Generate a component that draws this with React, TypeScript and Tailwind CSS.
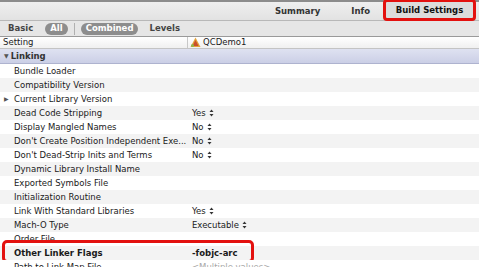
import React from 'react';

type Row = { name: string; value?: string; popup?: boolean; arrow?: boolean; bold?: boolean; muted?: boolean };

const rows: Row[] = [
  { name: 'Bundle Loader' },
  { name: 'Compatibility Version' },
  { name: 'Current Library Version', arrow: true },
  { name: 'Dead Code Stripping', value: 'Yes', popup: true },
  { name: 'Display Mangled Names', value: 'No', popup: true },
  { name: "Don't Create Position Independent Exe...", value: 'No', popup: true },
  { name: "Don't Dead-Strip Inits and Terms", value: 'No', popup: true },
  { name: 'Dynamic Library Install Name' },
  { name: 'Exported Symbols File' },
  { name: 'Initialization Routine' },
  { name: 'Link With Standard Libraries', value: 'Yes', popup: true },
  { name: 'Mach-O Type', value: 'Executable', popup: true },
  { name: 'Order File' },
  { name: 'Other Linker Flags', value: '-fobjc-arc', bold: true },
  { name: 'Path to Link Map File', value: '<Multiple values>', muted: true },
];

const Stepper = () => (
  <svg width="5" height="8" viewBox="0 0 5 8" className="ml-[3px] inline-block">
    <path d="M2.5 0.5 L4.5 3 L0.5 3 Z" fill="#333" />
    <path d="M2.5 7.5 L4.5 5 L0.5 5 Z" fill="#333" />
  </svg>
);

const AppIcon = () => (
  <svg width="11" height="11" viewBox="0 0 11 11" className="mr-[2px]">
    <path d="M5.5 0.5 L10.5 10 L0.5 10 Z" fill="#e3a23a" />
    <path d="M5.5 3 L8.5 9 L2.5 9 Z" fill="#c94f2a" />
    <circle cx="2.5" cy="8.5" r="1.5" fill="#8fb84a" />
  </svg>
);

export default function App() {
  return (
    <div className="w-[479px] h-[267px] overflow-hidden bg-white text-[#1a1a1a] font-['DejaVu_Sans',sans-serif] text-[8.5px] leading-none">
      {/* tab bar */}
      <div className="h-[21px] flex items-center justify-end border-t-2 border-[#8c8c8c] border-b border-b-[#b8b8b8] bg-gradient-to-b from-[#efefef] to-[#e2e2e2]">
        <span className="mr-[31px] font-semibold text-[#333]">Summary</span>
        <span className="mr-[13px] font-semibold text-[#333]">Info</span>
        <div className="h-[22px] -mt-[2px] w-[93px] mr-[3px] flex items-center justify-center rounded-[4px] border-[3px] border-[#e3110f] bg-[#dcdcdc] font-bold text-[#111]">
          Build Settings
        </div>
      </div>

      {/* filter bar */}
      <div className="h-[15px] flex items-center bg-[#e6e6e6] pl-[8px]">
        <span className="font-bold text-[#444]">Basic</span>
        <span className="ml-[12px] h-[12px] px-[5px] flex items-center rounded-full bg-[#8d8d8d] font-bold text-white">All</span>
        <span className="ml-[6px] h-[12px] w-px bg-[#b0b0b0]" />
        <span className="ml-[6px] h-[12px] px-[5px] flex items-center rounded-full bg-[#8d8d8d] font-bold text-white">Combined</span>
        <span className="ml-[11px] font-bold text-[#444]">Levels</span>
      </div>

      {/* header */}
      <div className="h-[13px] flex items-center border-t border-[#9a9a9a] border-b border-b-[#c4c4c4] bg-gradient-to-b from-[#ffffff] to-[#f0f0f0]">
        <span className="w-[188px] pl-[3px] border-r border-[#c8c8c8] h-full flex items-center">Setting</span>
        <span className="pl-[2px] flex items-center">
          <AppIcon />
          QCDemo1
        </span>
      </div>

      {/* group */}
      <div className="h-[15px] flex items-center pl-[4px] border-b border-[#aeb3cf] bg-gradient-to-b from-[#dfe2f1] to-[#cbcfe6] font-bold text-[#333]">
        <span className="text-[6px] mr-[2px] text-[#555]">▼</span>
        Linking
      </div>

      {rows.map((r, i) => (
        <div
          key={r.name}
          className={`relative h-[14px] flex items-center ${i % 2 === 1 ? 'bg-[#f3f3f3]' : 'bg-white'}`}
        >
          <span className="w-[192px] flex items-center pl-[14px] relative">
            {r.arrow && <span className="absolute left-[4px] text-[6px] text-[#555]">▶</span>}
            <span className={r.bold ? 'font-bold' : ''}>{r.name}</span>
          </span>
          {r.value && (
            <span className={`flex items-center ${r.bold ? 'font-bold' : ''} ${r.muted ? 'text-[#a8a8a8]' : ''}`}>
              {r.value}
              {r.popup && <Stepper />}
            </span>
          )}
          {r.bold && (
            <div className="absolute left-[2px] top-[-6px] w-[252px] h-[23px] rounded-[5px] border-[3px] border-[#e3110f]" />
          )}
        </div>
      ))}
    </div>
  );
}
